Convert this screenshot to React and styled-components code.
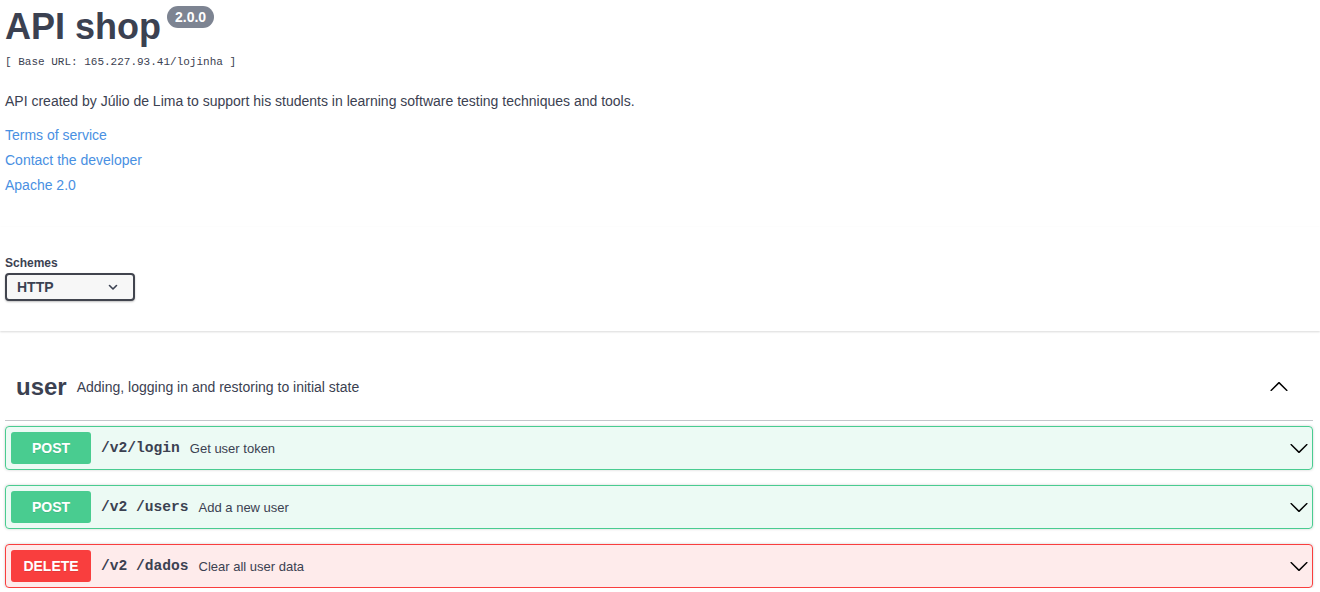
import React from "react";
import styled, { createGlobalStyle } from "styled-components";

const Global = createGlobalStyle`
  html, body { margin: 0; padding: 0; background: #fff; }
  body { font-family: "Liberation Sans", Arial, sans-serif; color: #3b4151; }
  * { box-sizing: border-box; }
`;

const Wrapper = styled.div`
  padding: 0 7px 0 5px;
`;

const Info = styled.section`
  display: flex;
  flex-direction: column;
  padding-bottom: 32px;
`;

const TitleRow = styled.div`
  display: flex;
  align-items: flex-start;
  gap: 6px;
`;

const Title = styled.h2`
  margin: 0;
  padding-top: 5px;
  font-size: 36px;
  line-height: 43px;
  font-weight: 700;
  color: #3b4151;
`;

const Version = styled.span`
  margin-top: 6px;
  height: 22px;
  padding: 0 8px;
  border-radius: 57px;
  background: #7d8492;
  color: #fff;
  font-size: 14px;
  font-weight: 700;
  line-height: 22px;
`;

const BaseUrl = styled.pre`
  margin: 7px 0 0;
  font-family: "Liberation Mono", monospace;
  font-size: 11px;
  line-height: 14px;
  color: #3b4151;
`;

const Description = styled.p`
  margin: 22px 0 14px;
  font-size: 14px;
  line-height: 20px;
`;

const Links = styled.div`
  display: flex;
  flex-direction: column;
  gap: 5px;
`;

const Link = styled.a`
  font-size: 14px;
  line-height: 20px;
  color: #4990e2;
  text-decoration: none;
  align-self: flex-start;
`;

const SchemeContainer = styled.section`
  padding: 30px 0;
  background: #fff;
  box-shadow: 0 1px 2px 0 rgba(0, 0, 0, 0.15);
`;

const SchemeInner = styled.div`
  padding: 0 7px 0 5px;
  display: flex;
  flex-direction: column;
  gap: 4px;
`;

const Label = styled.label`
  font-size: 12px;
  line-height: 12px;
  font-weight: 700;
  color: #3b4151;
`;

const Select = styled.div`
  width: 130px;
  height: 28px;
  display: flex;
  align-items: center;
  justify-content: space-between;
  padding: 0 14px 0 10px;
  border: 2px solid #41444e;
  border-radius: 4px;
  background: #f7f7f7;
  box-shadow: 0 1px 2px 0 rgba(0, 0, 0, 0.25);
  font-size: 14px;
  font-weight: 700;
  color: #3b4151;
`;

const Tag = styled.section`
  margin-top: 20px;
`;

const TagHeading = styled.h3`
  margin: 0 0 5px;
  height: 70px;
  display: flex;
  align-items: center;
  padding: 2px 24px 0 11px;
  border-bottom: 1px solid rgba(59, 65, 81, 0.3);
  font-weight: 400;
`;

const TagName = styled.span`
  font-size: 24px;
  font-weight: 700;
  color: #3b4151;
`;

const TagDesc = styled.small`
  flex: 1;
  margin-left: 10px;
  font-size: 14px;
  color: #3b4151;
`;

const OpList = styled.div`
  display: flex;
  flex-direction: column;
  gap: 15px;
`;

const colors = {
  POST: { main: "#49cc90", bg: "rgba(73,204,144,.1)" },
  DELETE: { main: "#f93e3e", bg: "rgba(249,62,62,.1)" },
};

const OpBlock = styled.div`
  height: 44px;
  display: flex;
  align-items: center;
  padding: 0 3px 0 5px;
  border: 1px solid ${(p) => colors[p.$method].main};
  background: ${(p) => colors[p.$method].bg};
  border-radius: 4px;
  box-shadow: 0 0 3px rgba(0, 0, 0, 0.19);
`;

const Method = styled.span`
  width: 80px;
  height: 32px;
  display: flex;
  align-items: center;
  justify-content: center;
  border-radius: 3px;
  background: ${(p) => colors[p.$method].main};
  color: #fff;
  font-size: 14px;
  font-weight: 700;
  text-shadow: 0 1px 0 rgba(0, 0, 0, 0.1);
`;

const Path = styled.span`
  margin-left: 10px;
  font-family: "Liberation Mono", monospace;
  font-size: 14.6px;
  font-weight: 700;
  color: #3b4151;
  white-space: pre;
`;

const Summary = styled.span`
  flex: 1;
  margin-left: 10px;
  font-size: 13px;
  color: #3b4151;
`;

const Arrow = ({ up, size = 20 }) => (
  <svg width={size} height={size} viewBox="0 0 20 20" style={{ transform: up ? "rotate(180deg)" : undefined, display: "block" }}>
    <path
      fill="#000"
      d="M17.418 6.109c.272-.268.709-.268.979 0s.271.701 0 .969l-7.908 7.83c-.27.268-.707.268-.979 0l-7.908-7.83c-.27-.268-.27-.701 0-.969.271-.268.709-.268.979 0L10 13.25l7.418-7.141z"
    />
  </svg>
);

const SmallChevron = () => (
  <svg width="12" height="12" viewBox="0 0 12 12">
    <path d="M2.5 4.5 L6 8 L9.5 4.5" fill="none" stroke="#3b4151" strokeWidth="1.6" strokeLinecap="round" strokeLinejoin="round" />
  </svg>
);

const ops = [
  { method: "POST", path: "/v2/login", summary: "Get user token" },
  { method: "POST", path: "/v2 /users", summary: "Add a new user" },
  { method: "DELETE", path: "/v2 /dados", summary: "Clear all user data" },
];

export default function App() {
  return (
    <>
      <Global />
      <Wrapper>
        <Info>
          <TitleRow>
            <Title>API shop</Title>
            <Version>2.0.0</Version>
          </TitleRow>
          <BaseUrl>[ Base URL: 165.227.93.41/lojinha ]</BaseUrl>
          <Description>
            API created by Júlio de Lima to support his students in learning software testing techniques and tools.
          </Description>
          <Links>
            <Link href="#">Terms of service</Link>
            <Link href="#">Contact the developer</Link>
            <Link href="#">Apache 2.0</Link>
          </Links>
        </Info>
      </Wrapper>
      <SchemeContainer>
        <SchemeInner>
          <Label>Schemes</Label>
          <Select>
            <span>HTTP</span>
            <SmallChevron />
          </Select>
        </SchemeInner>
      </SchemeContainer>
      <Wrapper>
        <Tag>
          <TagHeading>
            <TagName>user</TagName>
            <TagDesc>Adding, logging in and restoring to initial state</TagDesc>
            <Arrow up />
          </TagHeading>
          <OpList>
            {ops.map((op) => (
              <OpBlock key={op.path} $method={op.method}>
                <Method $method={op.method}>{op.method}</Method>
                <Path>{op.path}</Path>
                <Summary>{op.summary}</Summary>
                <Arrow />
              </OpBlock>
            ))}
          </OpList>
        </Tag>
      </Wrapper>
    </>
  );
}
